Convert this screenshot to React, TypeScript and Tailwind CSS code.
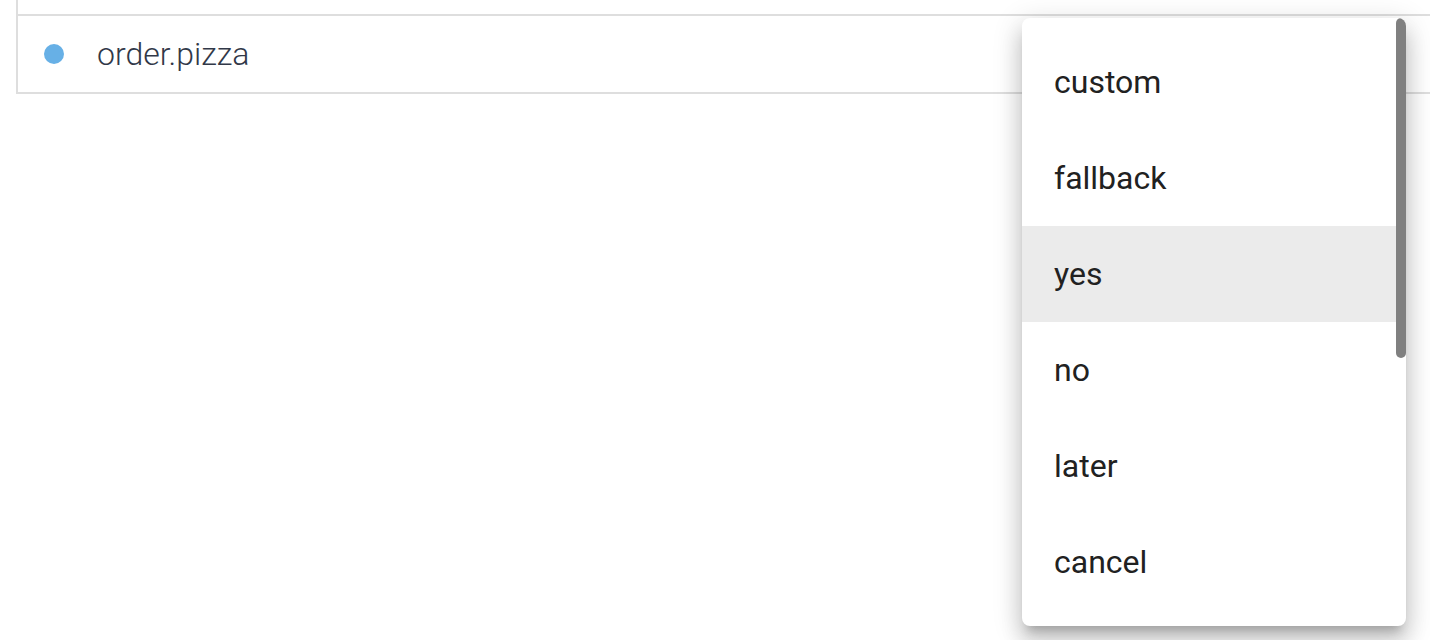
import React from "react";

const items = ["custom", "fallback", "yes", "no", "later", "cancel"];

export default function App() {
  return (
    <div className="relative w-[1430px] h-[640px] overflow-hidden bg-white" style={{ fontFamily: "Roboto, 'Liberation Sans', sans-serif" }}>
      <div className="ml-[16px] border-l-2 border-[#dedede]">
        <div className="h-[16px] border-b-2 border-[#dedede]" />
        <div className="h-[78px] border-b-2 border-[#dedede] flex items-center pl-[26px]">
          <span className="w-[20px] h-[20px] rounded-full bg-[#67b0e6] shrink-0" />
          <span className="ml-[33px] text-[32px] font-light text-[#313848] leading-none">order.pizza</span>
        </div>
      </div>

      <div
        className="absolute left-[1022px] top-[18px] w-[384px] h-[608px] bg-white rounded-[8px] overflow-hidden"
        style={{
          boxShadow:
            "0px 10px 10px -6px rgba(0,0,0,0.2), 0px 16px 20px 2px rgba(0,0,0,0.14), 0px 6px 28px 4px rgba(0,0,0,0.12)",
        }}
      >
        <ul className="py-[16px] pr-[10px]">
          {items.map((it) => (
            <li
              key={it}
              className={`h-[96px] flex items-center pl-[32px] text-[32px] text-[#212121] ${it === "yes" ? "bg-[#ebebeb]" : ""}`}
            >
              {it}
            </li>
          ))}
        </ul>
        <div className="absolute right-0 top-0 w-[10px] h-[340px] rounded-[5px] bg-[#808080]" />
      </div>
    </div>
  );
}
